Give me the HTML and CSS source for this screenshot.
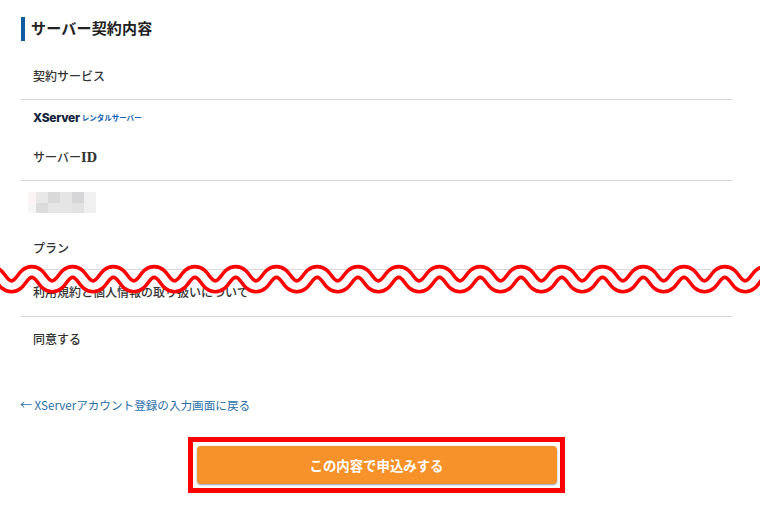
FILE: index.html
```html
<!DOCTYPE html>
<html lang="ja">
<head>
  <meta charset="UTF-8">
  <meta name="viewport" content="width=device-width, initial-scale=1.0">
  <title>サーバー契約内容</title>
  <link rel="stylesheet" href="styles.css">
</head>
<body>
  <div class="page">
    <h2 class="title">サーバー契約内容</h2>

    <div class="label first ruled">契約サービス</div>
    <div class="plan-name"><span class="xserver">XServer</span><span class="rental">レンタルサーバー</span></div>

    <div class="label second ruled">サーバー<span class="latin">ID</span></div>
    <div class="masked">
      <i class="s1"></i><i class="s2"></i><i class="s3"></i><i class="s4"></i><i class="s5"></i><i class="s6"></i>
      <i class="s7"></i><i class="s8"></i><i class="s4"></i><i class="s4"></i><i class="s9"></i><i class="s6"></i>
    </div>

    <div class="label plan ruled">プラン</div>
    <div class="label terms ruled">利用規約と個人情報の取り扱いについて</div>
    <div class="label agree">同意する</div>

    <a class="back" href="#"><span class="arrow">←</span> XServerアカウント登録の入力画面に戻る</a>

    <div class="highlight">
      <button class="submit">この内容で申込みする</button>
    </div>

    <svg class="wave" width="760" height="40" viewBox="0 0 760 40">
      <defs>
        <path id="tear" fill="none" d="M-29.26 22.3 c10.19 0 10.19-14.3 20.38-14.3 s10.19 14.3 20.38 14.3
          s10.19-14.3 20.38-14.3 s10.19 14.3 20.38 14.3 s10.19-14.3 20.38-14.3 s10.19 14.3 20.38 14.3
          s10.19-14.3 20.38-14.3 s10.19 14.3 20.38 14.3 s10.19-14.3 20.38-14.3 s10.19 14.3 20.38 14.3
          s10.19-14.3 20.38-14.3 s10.19 14.3 20.38 14.3 s10.19-14.3 20.38-14.3 s10.19 14.3 20.38 14.3
          s10.19-14.3 20.38-14.3 s10.19 14.3 20.38 14.3 s10.19-14.3 20.38-14.3 s10.19 14.3 20.38 14.3
          s10.19-14.3 20.38-14.3 s10.19 14.3 20.38 14.3 s10.19-14.3 20.38-14.3 s10.19 14.3 20.38 14.3
          s10.19-14.3 20.38-14.3 s10.19 14.3 20.38 14.3 s10.19-14.3 20.38-14.3 s10.19 14.3 20.38 14.3
          s10.19-14.3 20.38-14.3 s10.19 14.3 20.38 14.3 s10.19-14.3 20.38-14.3 s10.19 14.3 20.38 14.3
          s10.19-14.3 20.38-14.3 s10.19 14.3 20.38 14.3 s10.19-14.3 20.38-14.3 s10.19 14.3 20.38 14.3
          s10.19-14.3 20.38-14.3 s10.19 14.3 20.38 14.3 s10.19-14.3 20.38-14.3 s10.19 14.3 20.38 14.3
          s10.19-14.3 20.38-14.3 s10.19 14.3 20.38 14.3"/>
      </defs>
      <use href="#tear" stroke="#f00" stroke-width="14.4"/>
      <use href="#tear" stroke="#fff" stroke-width="7.2"/>
    </svg>
  </div>
</body>
</html>
```

FILE: styles.css
```css
* {
  margin: 0;
  padding: 0;
  box-sizing: border-box;
}
body {
  background: #fff;
  color: #222;
  font-family: "Noto Sans CJK JP", "Noto Sans", sans-serif;
}
.page {
  position: relative;
  width: 760px;
  height: 507px;
  padding: 17px 27px 0 21px;
  overflow: hidden;
}
.title {
  height: 24px;
  padding-left: 6px;
  border-left: 4px solid #0f5ba4;
  font-size: 15px;
  font-weight: 700;
  line-height: 22px;
  letter-spacing: 0.2px;
}
.label {
  padding-left: 12px;
  font-size: 12px;
  font-weight: 500;
  line-height: 20px;
  color: #333;
}
.ruled {
  border-bottom: 1px solid #d9d9d9;
}
.first {
  padding-top: 25px;
  height: 59px;
}
.plan-name {
  display: flex;
  align-items: center;
  gap: 2px;
  height: 26px;
  padding: 8px 0 0 12px;
}
.xserver {
  font-family: "Inter", "Liberation Sans", sans-serif;
  font-size: 12px;
  font-weight: 800;
  color: #14233c;
  letter-spacing: -0.3px;
}
.rental {
  font-size: 7.5px;
  font-weight: 700;
  color: #1560b0;
}
.second {
  height: 55px;
  padding-top: 21px;
}
.latin {
  font-family: "DejaVu Serif", serif;
  font-size: 12px;
  font-weight: 700;
}
.masked {
  display: grid;
  grid-template-columns: 8px repeat(5, 12px);
  grid-auto-rows: 10.5px;
  width: 68px;
  margin: 11px 0 0 7px;
}
.masked i {
  display: block;
}
.s1 { background: #faf4f4; }
.s2 { background: #e8e8e8; }
.s3 { background: #d9d9d9; }
.s4 { background: #e5e5e5; }
.s5 { background: #d5d5d8; }
.s6 { background: #f0f0f0; }
.s7 { background: #f5f5f5; }
.s8 { background: #dcdcdc; }
.s9 { background: #e2e2e2; }
.plan {
  height: 57px;
  padding-top: 25px;
}
.terms {
  height: 47px;
  padding-top: 12px;
}
.agree {
  padding-top: 12px;
  height: 32px;
}
.back {
  display: block;
  margin-top: 46px;
  margin-left: -1px;
  font-size: 11.6px;
  line-height: 20px;
  color: #2a6fa8;
  text-decoration: none;
}
.arrow {
  font-size: 12px;
}
.highlight {
  display: flex;
  align-items: center;
  justify-content: center;
  width: 377px;
  height: 56px;
  margin: 22px 0 0 167px;
  border: 5px solid #f00;
  background: #fff;
}
.submit {
  width: 360px;
  height: 38px;
  border: none;
  border-radius: 4px;
  background: #f7922a;
  box-shadow: 0 1px 2px rgba(60, 90, 130, 0.6);
  color: #fff;
  font-family: inherit;
  font-size: 13.4px;
  font-weight: 700;
  cursor: pointer;
}
.wave {
  position: absolute;
  top: 264px;
  left: 0;
}
```
